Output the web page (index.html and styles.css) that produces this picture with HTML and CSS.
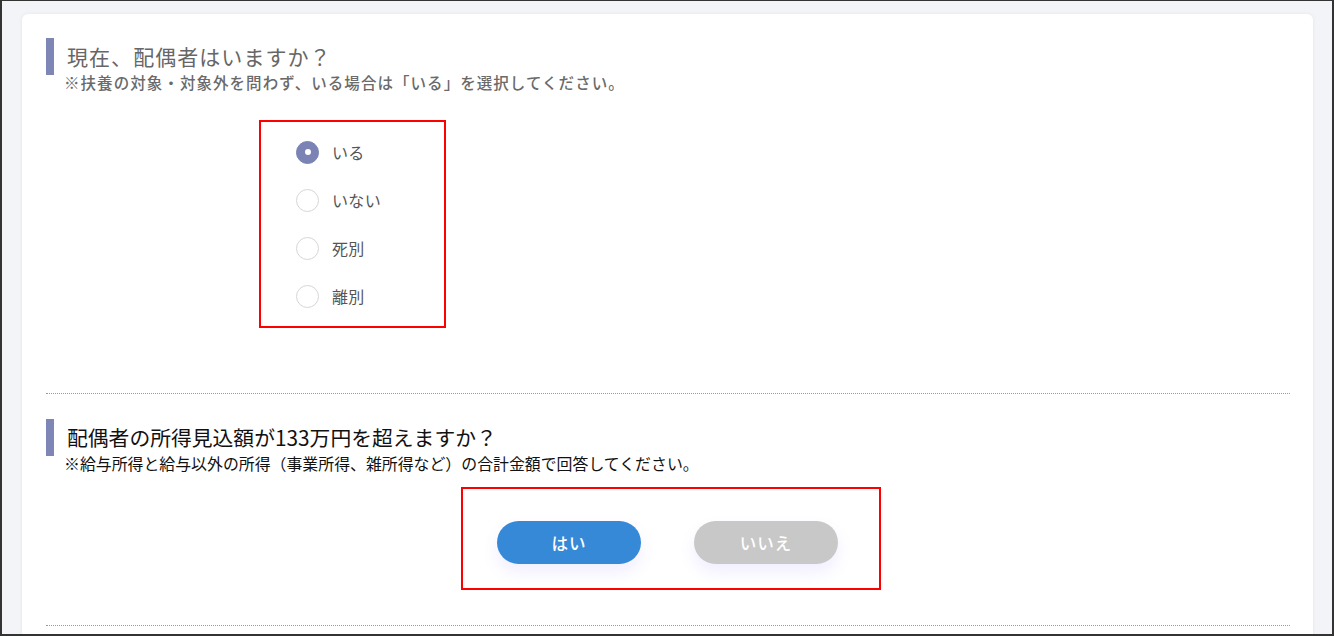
FILE: index.html
```html
<!DOCTYPE html>
<html lang="ja">
<head>
<meta charset="utf-8">
<title>配偶者</title>
<link rel="stylesheet" href="styles.css">
</head>
<body>
<div class="frame">
  <div class="card">
    <section class="q q1">
      <h2 class="q-title grey">現在、配偶者はいますか？</h2>
      <p class="q-note grey">※扶養の対象・対象外を問わず、いる場合は「いる」を選択してください。</p>
      <div class="mark radios">
        <label class="radio"><span class="dot checked"></span><span class="lbl">いる</span></label>
        <label class="radio"><span class="dot"></span><span class="lbl">いない</span></label>
        <label class="radio"><span class="dot"></span><span class="lbl">死別</span></label>
        <label class="radio"><span class="dot"></span><span class="lbl">離別</span></label>
      </div>
    </section>
    <hr class="sep">
    <section class="q q2">
      <h2 class="q-title dark">配偶者の所得見込額が133万円を超えますか？</h2>
      <p class="q-note dark n2">※給与所得と給与以外の所得（事業所得、雑所得など）の合計金額で回答してください。</p>
      <div class="btn-row">
        <div class="mark btns">
          <button class="btn yes">はい</button>
          <button class="btn no">いいえ</button>
        </div>
      </div>
    </section>
    <hr class="sep sep2">
  </div>
</div>
</body>
</html>
```
FILE: styles.css
```css
* { box-sizing: border-box; }
html, body { margin: 0; padding: 0; }
body {
  font-family: "Noto Sans CJK JP", "Noto Sans", sans-serif;
  background: #f3f4f8;
}
.frame {
  height: 636px;
  overflow: hidden;
  border: 1px solid #333;
  border-left-width: 2px;
  border-right-width: 2px;
  border-bottom-width: 2px;
  background: #f3f4f8;
  padding: 13px 19px 0 20px;
}
.card {
  background: #fff;
  border-radius: 6px 6px 0 0;
  box-shadow: 0 0 4px rgba(0,0,0,0.06);
  padding: 24px 23px 40px 24px;
  height: 700px;
}
.q-title {
  margin: 0;
  height: 37px;
  line-height: 36px;
  border-left: 8px solid #7d86b4;
  padding-left: 13px;
  font-weight: 400;
  font-size: 21px;
  letter-spacing: 0.05em;
}
.q2 .q-title { font-size: 20.8px; letter-spacing: 0; }
.grey { color: #666; }
.dark { color: #111; }
.q-note {
  margin: -4px 0 0 0;
  padding-left: 18px;
  font-size: 15.5px;
  line-height: 22px;
  letter-spacing: 0.068em;
}
.q-note.grey { font-weight: 500; color: #6a6a6a; }
.q-note.n2 { font-size: 15.9px; letter-spacing: 0; margin-top: -3px; }
.mark { border: 2px solid #f00; }
.radios {
  margin: 27px 0 0 213px;
  width: 187px;
  padding: 6px 0 6px 35px;
  display: flex;
  flex-direction: column;
}
.radio {
  display: flex;
  align-items: center;
  height: 48px;
  gap: 13px;
}
.dot {
  width: 23px;
  height: 23px;
  border-radius: 50%;
  border: 1.5px solid #d6d6d6;
  background: #fff;
  flex: none;
  position: relative;
}
.dot.checked {
  background: #7b83b5;
  border-color: #7b83b5;
}
.dot.checked::after {
  content: "";
  position: absolute;
  left: 50%;
  top: 50%;
  width: 6px;
  height: 6px;
  margin: -3px 0 0 -3px;
  border-radius: 50%;
  background: #fff;
}
.lbl {
  font-size: 16px;
  color: #555;
  letter-spacing: 0.02em;
}
.sep {
  border: 0;
  border-top: 1px dotted #9a9a9a;
  margin: 65px 0 25px 0;
  height: 0;
}
.sep2 { margin-top: 35px; }
.btn-row {
  display: flex;
  justify-content: center;
  margin-top: 12px;
}
.btns {
  width: 420px;
  margin-left: 6px;
  padding: 32px 40px 24px 34px;
  display: flex;
  gap: 53px;
}
.btn {
  width: 144px;
  height: 43px;
  border: 0;
  border-radius: 22px;
  color: #fff;
  font-family: inherit;
  font-size: 16.5px;
  font-weight: 500;
  letter-spacing: 0.06em;
  box-shadow: 0 8px 16px rgba(110, 90, 255, 0.10);
}
.yes { background: #3689d7; }
.no { background: #c8c8c8; }
```
